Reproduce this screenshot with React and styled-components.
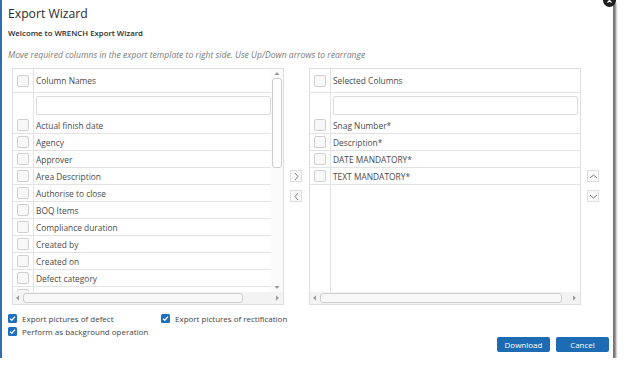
import React from "react";
import styled, { createGlobalStyle } from "styled-components";

const Global = createGlobalStyle`
  html, body { margin: 0; padding: 0; background: #fff; }
  body { font-family: "Open Sans", "Liberation Sans", sans-serif; color: #333; }
  * { box-sizing: border-box; }
`;

const Dialog = styled.div`
  position: relative;
  width: 613px;
  height: 358px;
  background: #fff;
  border-left: 2px solid #2f6fb1;
  padding: 6px 4px 6px 6px;
  box-shadow: 3px 3px 2px rgba(0, 0, 0, 0.55);
  display: flex;
  flex-direction: column;
`;

const CloseDot = styled.div`
  position: absolute;
  top: -6px;
  right: -3px;
  width: 13px;
  height: 13px;
  border-radius: 50%;
  background: #1e1e1e;
  display: flex;
  align-items: center;
  justify-content: center;
`;

const Title = styled.h1`
  margin: 0;
  font-size: 12.2px;
  line-height: 16px;
  font-weight: 400;
  color: #2a2a2a;
`;

const Welcome = styled.div`
  margin-top: 5px;
  font-size: 7.8px;
  line-height: 12px;
  font-weight: 600;
  color: #2a2a2a;
`;

const Hint = styled.div`
  margin-top: 10px;
  font-size: 8.6px;
  line-height: 12px;
  font-style: italic;
  color: #7a7a7a;
`;

const ListsArea = styled.div`
  margin-top: 7px;
  margin-left: 4px;
  display: flex;
  align-items: flex-start;
`;

const Grid = styled.div`
  width: 272px;
  height: 237px;
  border: 1px solid #dedede;
  display: flex;
  flex-direction: column;
  background: #fff;
  flex: none;
`;

const GridBody = styled.div`
  flex: 1;
  min-height: 0;
  display: flex;
`;

const GridContent = styled.div`
  flex: 1;
  min-width: 0;
  overflow: hidden;
`;

const Row = styled.div`
  display: flex;
  height: ${(p) => p.$h}px;
  border-bottom: ${(p) => (p.$line ? "1px solid #e3e3e3" : "none")};
`;

const CheckCell = styled.div`
  width: 21px;
  flex: none;
  border-right: 1px solid #e3e3e3;
  display: flex;
  align-items: center;
  justify-content: center;
`;

const TextCell = styled.div`
  flex: 1;
  min-width: 0;
  display: flex;
  align-items: center;
  padding-left: 2px;
  padding-right: ${(p) => p.$pr || 0}px;
  font-size: 8.4px;
  color: #4a4a4a;
  white-space: nowrap;
`;

const FilterInput = styled.div`
  width: 100%;
  height: 19px;
  border: 1px solid #dcdcdc;
  border-radius: 2px;
  background: #fff;
`;

const Box = styled.span`
  display: inline-block;
  width: 12px;
  height: 12px;
  border: 1px solid #cfcfcf;
  border-radius: 2px;
  background: #f8f8f8;
`;

const VScroll = styled.div`
  width: 12px;
  flex: none;
  display: flex;
  flex-direction: column;
  align-items: center;
  padding: 2px 0 2px;
  background: #fbfbfb;
`;

const VThumb = styled.div`
  width: 10px;
  height: 90px;
  margin-top: 2px;
  border: 1px solid #cccccc;
  border-radius: 3px;
  background: #fff;
`;

const Spacer = styled.div`
  flex: 1;
`;

const HScroll = styled.div`
  height: 12px;
  flex: none;
  display: flex;
  align-items: center;
  padding: 0 3px 0 2px;
  background: #f3f3f3;
  gap: 3px;
`;

const HThumb = styled.div`
  width: ${(p) => p.$w}px;
  height: 10px;
  border: 1px solid #cdcdcd;
  border-radius: 3px;
  background: #f8f8f8;
`;

const HTrack = styled.div`
  flex: 1;
  display: flex;
  align-items: center;
`;

const Tri = styled.svg`
  flex: none;
  display: block;
`;

const ButtonCol = styled.div`
  display: flex;
  flex-direction: column;
  gap: 8px;
  padding-top: 102px;
  margin: 0 ${(p) => p.$mr}px 0 ${(p) => p.$ml}px;
`;

const MoveBtn = styled.div`
  width: 12px;
  height: 12px;
  border: 1px solid #dedede;
  background: #fafafa;
  display: flex;
  align-items: center;
  justify-content: center;
`;

const Footer = styled.div`
  margin-top: 8px;
  display: flex;
  justify-content: space-between;
  align-items: flex-start;
`;

const Options = styled.div`
  display: grid;
  grid-template-columns: 153px auto;
  row-gap: 3px;
`;

const Option = styled.label`
  display: flex;
  align-items: center;
  gap: 5px;
  height: 10px;
  font-size: 8px;
  color: #444;
  white-space: nowrap;
`;

const BlueCheck = styled.span`
  width: 9px;
  height: 9px;
  border-radius: 1.5px;
  background: #1f6fc0;
  display: flex;
  align-items: center;
  justify-content: center;
  flex: none;
`;

const Buttons = styled.div`
  margin-top: 24px;
  display: flex;
  gap: 6px;
`;

const Btn = styled.button`
  width: 53px;
  height: 15px;
  padding: 0;
  border: none;
  border-radius: 2px;
  background: #1d6cb3;
  color: #fff;
  font-family: "Open Sans", "Liberation Sans", sans-serif;
  font-size: 8px;
  line-height: 15px;
`;

const Up = () => (
  <Tri width="6" height="5" viewBox="0 0 6 5"><polygon points="3,1 5.5,4 0.5,4" fill="#9a9a9a" /></Tri>
);
const Down = () => (
  <Tri width="6" height="5" viewBox="0 0 6 5"><polygon points="0.5,1 5.5,1 3,4" fill="#9a9a9a" /></Tri>
);
const Left = () => (
  <Tri width="5" height="6" viewBox="0 0 5 6"><polygon points="1,3 4,0.5 4,5.5" fill="#9a9a9a" /></Tri>
);
const Right = () => (
  <Tri width="5" height="6" viewBox="0 0 5 6"><polygon points="1,0.5 4,3 1,5.5" fill="#9a9a9a" /></Tri>
);

const Chevron = ({ dir }) => {
  const pts = {
    right: "3,1 6,4.5 3,8",
    left: "6,1 3,4.5 6,8",
    up: "1,6 4.5,3 8,6",
    down: "1,3 4.5,6 8,3",
  }[dir];
  return (
    <svg width="9" height="9" viewBox="0 0 9 9">
      <polyline points={pts} fill="none" stroke="#707070" strokeWidth="0.9" />
    </svg>
  );
};

const Tick = () => (
  <svg width="7" height="7" viewBox="0 0 7 7">
    <polyline points="1,3.6 2.8,5.3 6,1.6" fill="none" stroke="#fff" strokeWidth="1.3" />
  </svg>
);

const CloseX = () => (
  <svg width="7" height="7" viewBox="0 0 7 7">
    <path d="M1.5 1.5 L5.5 5.5 M5.5 1.5 L1.5 5.5" stroke="#fff" strokeWidth="1.2" />
  </svg>
);

const available = [
  "Actual finish date",
  "Agency",
  "Approver",
  "Area Description",
  "Authorise to close",
  "BOQ Items",
  "Compliance duration",
  "Created by",
  "Created on",
  "Defect category",
  "Discipline",
];

const selected = ["Snag Number*", "Description*", "DATE MANDATORY*", "TEXT MANDATORY*"];

function ColumnGrid({ title, items, scroll, thumb, inputPad }) {
  return (
    <Grid>
      <GridBody>
        <GridContent>
          <Row $h={24} $line>
            <CheckCell><Box /></CheckCell>
            <TextCell>{title}</TextCell>
          </Row>
          <Row $h={24}>
            <CheckCell />
            <TextCell $pr={inputPad}><FilterInput /></TextCell>
          </Row>
          {items.map((it) => (
            <Row key={it} $h={17} $line>
              <CheckCell><Box /></CheckCell>
              <TextCell>{it}</TextCell>
            </Row>
          ))}
          <Row $h={120}>
            <CheckCell />
            <TextCell />
          </Row>
        </GridContent>
        {scroll && (
          <VScroll>
            <Up />
            <VThumb />
            <Spacer />
            <Down />
          </VScroll>
        )}
      </GridBody>
      <HScroll>
        <Left />
        <HTrack><HThumb $w={thumb} /></HTrack>
        <Right />
      </HScroll>
    </Grid>
  );
}

export default function App() {
  return (
    <>
      <Global />
      <Dialog>
        <CloseDot><CloseX /></CloseDot>
        <Title>Export Wizard</Title>
        <Welcome>Welcome to WRENCH Export Wizard</Welcome>
        <Hint>Move required columns in the export template to right side. Use Up/Down arrows to rearrange</Hint>
        <ListsArea>
          <ColumnGrid title="Column Names" items={available} scroll thumb={220} inputPad={0} />
          <ButtonCol $ml={6} $mr={7}>
            <MoveBtn><Chevron dir="right" /></MoveBtn>
            <MoveBtn><Chevron dir="left" /></MoveBtn>
          </ButtonCol>
          <ColumnGrid title="Selected Columns" items={selected} thumb={242} inputPad={2} />
          <ButtonCol $ml={6} $mr={0}>
            <MoveBtn><Chevron dir="up" /></MoveBtn>
            <MoveBtn><Chevron dir="down" /></MoveBtn>
          </ButtonCol>
        </ListsArea>
        <Footer>
          <Options>
            <Option><BlueCheck><Tick /></BlueCheck>Export pictures of defect</Option>
            <Option><BlueCheck><Tick /></BlueCheck>Export pictures of rectification</Option>
            <Option><BlueCheck><Tick /></BlueCheck>Perform as background operation</Option>
          </Options>
          <Buttons>
            <Btn>Download</Btn>
            <Btn>Cancel</Btn>
          </Buttons>
        </Footer>
      </Dialog>
    </>
  );
}
